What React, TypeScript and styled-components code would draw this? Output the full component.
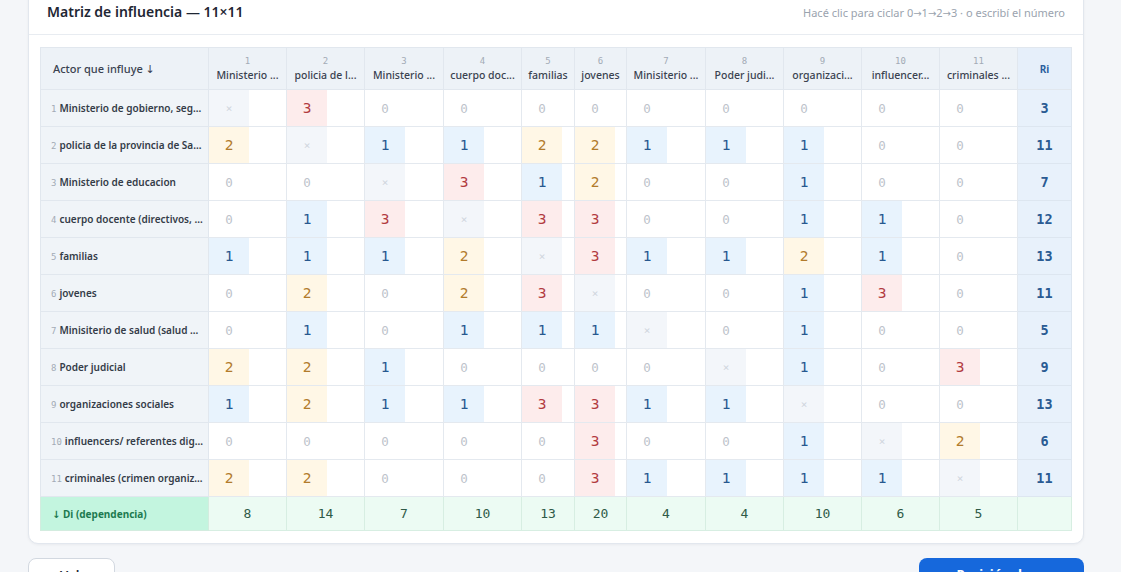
import React from "react";
import styled, { createGlobalStyle } from "styled-components";

const Global = createGlobalStyle`
  html, body { margin: 0; padding: 0; overflow: hidden; background: #f4f6f9; }
  body { font-family: "Noto Sans", "Open Sans", sans-serif; color: #1f2937; }
  * { box-sizing: border-box; }
`;

const Page = styled.div`
  padding: 0 37px 0 28px;
  display: flex;
  flex-direction: column;
  gap: 14px;
`;

const Card = styled.section`
  margin-top: -12px;
  background: #fff;
  border: 1px solid #e2e7ee;
  border-radius: 10px;
  box-shadow: 0 1px 3px rgba(15, 23, 42, 0.05);
`;

const CardHeader = styled.header`
  display: flex;
  align-items: center;
  justify-content: space-between;
  padding: 13px 18px 12px 18px;
  border-bottom: 1px solid #e8ecf1;
`;

const Title = styled.h2`
  margin: 0;
  font-size: 14px;
  line-height: 20px;
  font-weight: 600;
  color: #1e2633;
`;

const Hint = styled.span`
  font-size: 11px;
  color: #9aa3ae;
`;

const Arrow = styled.span<{ $size?: number }>`
  font-family: "DejaVu Sans", sans-serif;
  font-size: ${(p) => p.$size ?? 10}px;
`;

const CardBody = styled.div`
  padding: 12px 12px 12px 11px;
`;

const Table = styled.table`
  border-collapse: collapse;
  table-layout: fixed;
  width: 1031px;
`;

const HeadCell = styled.th<{ $ri?: boolean }>`
  height: 42px;
  background: ${(p) => (p.$ri ? "#e6effa" : "#edf2f7")};
  border: 1px solid #e1e7ee;
  font-weight: ${(p) => (p.$ri ? 700 : 500)};
  text-align: center;
  padding: 0 2px;
  color: ${(p) => (p.$ri ? "#2c5f9e" : "#3a4250")};
  font-size: ${(p) => (p.$ri ? "10px" : "10.5px")};
  white-space: nowrap;
  overflow: hidden;
`;

const CornerCell = styled.th`
  height: 42px;
  background: #edf2f7;
  border: 1px solid #e1e7ee;
  text-align: left;
  padding: 0 12px;
  font-size: 11px;
  font-weight: 500;
  color: #3a4250;
`;

const ColNum = styled.div`
  font-size: 9px;
  color: #a3abb6;
  font-family: "DejaVu Sans Mono", monospace;
  line-height: 12px;
`;

const ColName = styled.div`
  line-height: 16px;
`;

const Row = styled.tr``;

const LabelCell = styled.td`
  height: 37px;
  background: #f0f4f8;
  border: 1px solid #e1e7ee;
  padding: 0 0 0 10px;
  font-size: 10px;
  font-weight: 600;
  color: #343c48;
  white-space: nowrap;
  overflow: hidden;
`;

const RowNum = styled.span`
  font-size: 9px;
  font-weight: 400;
  color: #a3abb6;
  margin-right: 3px;
  font-family: "DejaVu Sans Mono", monospace;
`;

const ValueCell = styled.td`
  height: 37px;
  padding: 0;
  border: 1px solid #e4e9ef;
  background: #fff;
`;

const tones: Record<string, { bg: string; fg: string }> = {
  x: { bg: "#f3f6fa", fg: "#cfd5dd" },
  "0": { bg: "transparent", fg: "#bdc3cb" },
  "1": { bg: "#e8f3fd", fg: "#27588f" },
  "2": { bg: "#fff7e6", fg: "#b27b2c" },
  "3": { bg: "#fdecec", fg: "#b23b3f" },
};

const ValueBox = styled.div<{ $tone: string }>`
  width: 40px;
  height: 36px;
  display: flex;
  align-items: center;
  justify-content: center;
  background: ${(p) => tones[p.$tone].bg};
  color: ${(p) => tones[p.$tone].fg};
  font-family: "DejaVu Sans Mono", "Liberation Mono", monospace;
  font-size: ${(p) => (p.$tone === "x" ? "11px" : p.$tone === "0" ? "12.5px" : "14.5px")};
`;

const RiCell = styled.td`
  height: 37px;
  background: #e8f1fb;
  border: 1px solid #dde6f0;
  text-align: center;
  font-family: "DejaVu Sans Mono", monospace;
  font-size: 13.5px;
  font-weight: 700;
  color: #2a5b93;
`;

const DiLabel = styled.td`
  height: 34px;
  background: #c3f5df;
  border: 1px solid #d3ecdf;
  padding: 0 0 0 11px;
  font-size: 10px;
  font-weight: 700;
  color: #1d7a50;
`;

const DiCell = styled.td`
  height: 34px;
  background: #ecfbf3;
  border: 1px solid #d7eee2;
  text-align: center;
  font-family: "DejaVu Sans Mono", monospace;
  font-size: 13px;
  color: #2f5a47;
`;

const Footer = styled.div`
  display: flex;
  justify-content: space-between;
  align-items: flex-start;
`;

const GhostButton = styled.button`
  padding: 7px 14px 12px 14px;
  line-height: 18px;
  border: 1px solid #d2d8e0;
  border-radius: 8px;
  background: #fff;
  font-family: "Noto Sans", sans-serif;
  font-size: 13px;
  font-weight: 600;
  color: #1f2937;
  display: flex;
  align-items: center;
  gap: 6px;
`;

const PrimaryButton = styled.button`
  padding: 7px 14px 12px 14px;
  line-height: 18px;
  width: 165px;
  border: none;
  border-radius: 8px;
  background: #1668dc;
  color: #fff;
  font-family: "Noto Sans", sans-serif;
  font-size: 13px;
  font-weight: 700;
  display: flex;
  align-items: center;
  justify-content: center;
  gap: 6px;
`;

const cols = [
  "Ministerio ...",
  "policia de l...",
  "Ministerio ...",
  "cuerpo doc...",
  "familias",
  "jovenes",
  "Minisiterio ...",
  "Poder judi...",
  "organizaci...",
  "influencer...",
  "criminales ...",
];

const rows = [
  "Ministerio de gobierno, seg...",
  "policia de la provincia de Sa...",
  "Ministerio de educacion",
  "cuerpo docente (directivos, ...",
  "familias",
  "jovenes",
  "Minisiterio de salud (salud ...",
  "Poder judicial",
  "organizaciones sociales",
  "influencers/ referentes dig...",
  "criminales (crimen organiz...",
];

const X = -1;
const matrix: number[][] = [
  [X, 3, 0, 0, 0, 0, 0, 0, 0, 0, 0],
  [2, X, 1, 1, 2, 2, 1, 1, 1, 0, 0],
  [0, 0, X, 3, 1, 2, 0, 0, 1, 0, 0],
  [0, 1, 3, X, 3, 3, 0, 0, 1, 1, 0],
  [1, 1, 1, 2, X, 3, 1, 1, 2, 1, 0],
  [0, 2, 0, 2, 3, X, 0, 0, 1, 3, 0],
  [0, 1, 0, 1, 1, 1, X, 0, 1, 0, 0],
  [2, 2, 1, 0, 0, 0, 0, X, 1, 0, 3],
  [1, 2, 1, 1, 3, 3, 1, 1, X, 0, 0],
  [0, 0, 0, 0, 0, 3, 0, 0, 1, X, 2],
  [2, 2, 0, 0, 0, 3, 1, 1, 1, 1, X],
];

const widths = [168, 78, 78, 79, 78, 53, 52, 79, 78, 78, 78, 78, 54];

export default function App() {
  const ri = matrix.map((r) => r.reduce((s, v) => s + (v > 0 ? v : 0), 0));
  const di = cols.map((_, j) => matrix.reduce((s, r) => s + (r[j] > 0 ? r[j] : 0), 0));
  return (
    <>
      <Global />
      <Page>
        <Card>
          <CardHeader>
            <Title>Matriz de influencia — 11×11</Title>
            <Hint>
              Hacé clic para ciclar 0<Arrow>→</Arrow>1<Arrow>→</Arrow>2<Arrow>→</Arrow>3 · o escribí el número
            </Hint>
          </CardHeader>
          <CardBody>
            <Table>
              <colgroup>
                {widths.map((w, i) => (
                  <col key={i} style={{ width: w }} />
                ))}
              </colgroup>
              <thead>
                <tr>
                  <CornerCell>
                    Actor que influye <Arrow $size={11}>↓</Arrow>
                  </CornerCell>
                  {cols.map((c, i) => (
                    <HeadCell key={i}>
                      <ColNum>{i + 1}</ColNum>
                      <ColName>{c}</ColName>
                    </HeadCell>
                  ))}
                  <HeadCell $ri>Ri</HeadCell>
                </tr>
              </thead>
              <tbody>
                {rows.map((r, i) => (
                  <Row key={i}>
                    <LabelCell>
                      <RowNum>{i + 1}</RowNum>
                      {r}
                    </LabelCell>
                    {matrix[i].map((v, j) => (
                      <ValueCell key={j}>
                        <ValueBox $tone={v === X ? "x" : String(v)}>{v === X ? "×" : v}</ValueBox>
                      </ValueCell>
                    ))}
                    <RiCell>{ri[i]}</RiCell>
                  </Row>
                ))}
                <Row>
                  <DiLabel>
                    <Arrow>↓</Arrow> Di (dependencia)
                  </DiLabel>
                  {di.map((d, j) => (
                    <DiCell key={j}>{d}</DiCell>
                  ))}
                  <DiCell />
                </Row>
              </tbody>
            </Table>
          </CardBody>
        </Card>
        <Footer>
          <GhostButton>
            <Arrow $size={13}>←</Arrow> Volver
          </GhostButton>
          <PrimaryButton>
            Posición de actores <Arrow $size={13}>→</Arrow>
          </PrimaryButton>
        </Footer>
      </Page>
    </>
  );
}
